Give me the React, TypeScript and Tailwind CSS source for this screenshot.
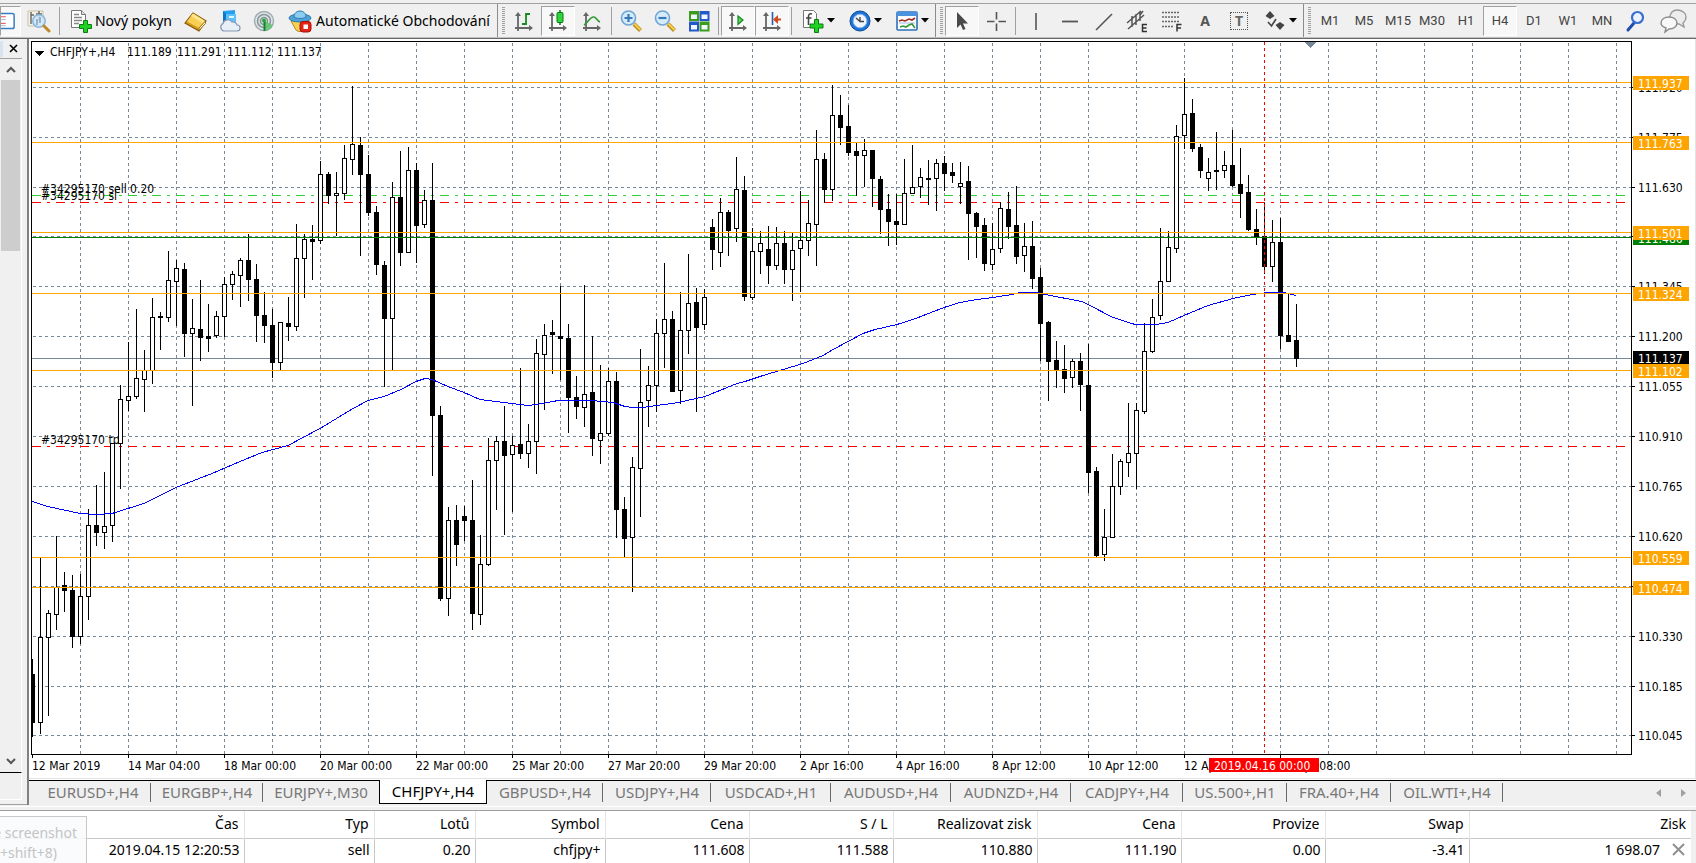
import type { ReactNode } from 'react'
import clsx from 'clsx'

// high, body top, body bottom, low, 1 = rising (hollow)
type Candle = [number, number, number, number, 0 | 1]

const ORIGIN_X = 32
const ORIGIN_Y = 42
const STEP = 8

const candles: Candle[] = [
  [659, 674, 723, 737, 0], [558, 637, 723, 734, 1], [610, 613, 638, 716, 1], [536, 587, 615, 630, 1],
  [572, 585, 591, 612, 0], [575, 590, 637, 648, 0], [574, 596, 637, 644, 1], [509, 525, 597, 620, 1],
  [485, 525, 533, 546, 0], [472, 526, 533, 549, 1], [443, 443, 526, 542, 1], [385, 399, 444, 489, 1],
  [342, 396, 401, 411, 1], [309, 378, 397, 399, 1], [350, 370, 380, 412, 1], [298, 317, 371, 384, 1],
  [312, 316, 318, 350, 0], [251, 280, 318, 322, 1], [260, 268, 282, 326, 1], [263, 269, 334, 357, 0],
  [299, 328, 334, 406, 1], [280, 329, 338, 361, 0], [304, 336, 339, 352, 0], [311, 316, 336, 338, 1],
  [277, 284, 317, 337, 1], [271, 274, 285, 300, 1], [258, 260, 276, 307, 1], [234, 260, 280, 301, 0],
  [264, 279, 316, 342, 0], [292, 315, 326, 343, 0], [309, 325, 363, 378, 0], [322, 322, 363, 370, 1],
  [297, 323, 327, 341, 0], [224, 258, 327, 331, 1], [234, 239, 259, 298, 1], [225, 239, 242, 280, 0],
  [161, 174, 241, 244, 1], [172, 174, 196, 204, 0], [172, 193, 196, 236, 1], [145, 158, 194, 200, 1],
  [86, 144, 160, 175, 1], [137, 145, 175, 256, 0], [155, 174, 213, 216, 0], [206, 212, 265, 275, 0],
  [261, 265, 319, 387, 0], [182, 197, 319, 370, 1], [151, 197, 253, 266, 0], [147, 170, 253, 253, 1],
  [163, 170, 226, 263, 0], [190, 200, 225, 228, 1], [163, 200, 416, 476, 0], [406, 415, 599, 601, 0],
  [507, 520, 599, 616, 1], [505, 520, 545, 566, 0], [506, 516, 521, 541, 0], [480, 520, 614, 630, 0],
  [535, 564, 615, 625, 1], [438, 460, 565, 566, 1], [436, 441, 461, 510, 1], [406, 441, 456, 535, 0],
  [436, 445, 455, 512, 1], [368, 444, 454, 459, 0], [424, 441, 454, 468, 1], [339, 353, 442, 474, 1],
  [324, 335, 355, 410, 1], [320, 332, 335, 374, 0], [286, 336, 339, 380, 0], [324, 338, 398, 433, 0],
  [376, 397, 407, 419, 0], [285, 394, 408, 427, 1], [336, 392, 439, 456, 0], [365, 433, 441, 464, 1],
  [368, 381, 434, 436, 1], [372, 381, 510, 538, 0], [497, 509, 539, 557, 0], [457, 467, 538, 592, 1],
  [349, 402, 469, 517, 1], [366, 385, 401, 427, 1], [319, 333, 386, 412, 1], [263, 319, 334, 368, 1],
  [311, 319, 392, 392, 0], [292, 330, 391, 404, 1], [254, 303, 331, 354, 1], [288, 302, 328, 412, 0],
  [289, 297, 325, 330, 1], [219, 227, 250, 270, 0], [198, 212, 253, 267, 1], [210, 212, 231, 256, 0],
  [157, 189, 229, 242, 1], [176, 190, 297, 301, 0], [228, 251, 298, 300, 1], [231, 243, 252, 274, 1],
  [226, 249, 266, 284, 0], [227, 243, 266, 270, 1], [231, 243, 270, 284, 0], [233, 250, 270, 301, 1],
  [191, 240, 249, 292, 1], [200, 223, 241, 256, 1], [130, 159, 225, 266, 1], [153, 159, 190, 203, 0],
  [85, 115, 190, 201, 1], [95, 115, 128, 145, 0], [105, 126, 153, 156, 0], [143, 151, 156, 196, 0],
  [139, 150, 156, 187, 1], [150, 150, 179, 207, 0], [176, 179, 210, 234, 0], [194, 209, 222, 246, 0],
  [194, 221, 225, 245, 0], [159, 193, 225, 225, 1], [145, 187, 194, 194, 1], [168, 177, 187, 198, 1],
  [160, 178, 180, 205, 0], [159, 163, 179, 211, 1], [156, 163, 174, 191, 0], [163, 172, 176, 183, 0],
  [162, 183, 187, 204, 1], [166, 181, 214, 260, 0], [212, 213, 227, 258, 0], [218, 225, 264, 271, 0],
  [223, 249, 265, 270, 1], [202, 208, 249, 253, 1], [192, 209, 227, 239, 0], [186, 225, 257, 264, 0],
  [223, 246, 256, 272, 1], [221, 246, 279, 289, 0], [268, 277, 324, 361, 0], [321, 322, 362, 401, 0],
  [341, 360, 371, 388, 0], [345, 369, 379, 393, 0], [359, 361, 378, 388, 1], [353, 361, 385, 411, 0],
  [344, 385, 473, 493, 0], [467, 471, 556, 557, 0], [509, 537, 555, 561, 1], [454, 486, 538, 538, 1],
  [459, 461, 487, 495, 1], [403, 453, 463, 477, 1], [403, 410, 454, 489, 1], [323, 351, 412, 414, 1],
  [299, 317, 352, 353, 1], [228, 281, 316, 320, 1], [231, 247, 282, 282, 1], [125, 136, 249, 253, 1],
  [78, 114, 136, 149, 1], [99, 113, 149, 152, 0], [144, 147, 171, 178, 0], [158, 172, 179, 191, 1],
  [132, 170, 172, 190, 0], [151, 165, 171, 178, 1], [130, 165, 186, 187, 0], [148, 184, 194, 218, 0],
  [175, 192, 230, 231, 0], [209, 229, 237, 245, 0], [203, 236, 267, 274, 0], [220, 242, 267, 282, 1],
  [218, 242, 336, 349, 0], [294, 335, 342, 342, 0], [304, 340, 359, 367, 0],
]

const average: [number, number][] = [
  [32, 501], [48, 506], [80, 513], [96, 514], [112, 513], [144, 503], [176, 487], [212, 473], [240, 461],
  [262, 452], [288, 445], [320, 428], [353, 408], [368, 400], [384, 396], [401, 389], [416, 381], [425, 378],
  [432, 379], [448, 386], [464, 392], [480, 399], [504, 402], [528, 405], [543, 403], [558, 400], [592, 400],
  [613, 402], [625, 406], [633, 407], [643, 407], [663, 404], [673, 403], [687, 400], [705, 396], [737, 383],
  [745, 381], [763, 375], [783, 369], [803, 363], [823, 355], [833, 349], [848, 341], [863, 333], [875, 329],
  [897, 324], [913, 319], [944, 307], [960, 302], [977, 299], [993, 297], [1012, 294], [1020, 292],
  [1037, 292], [1045, 294], [1082, 301], [1088, 304], [1113, 317], [1135, 324], [1156, 324], [1168, 322],
  [1184, 315], [1208, 305], [1233, 298], [1252, 294], [1268, 292], [1284, 292], [1296, 295],
]

const gridPrices = [
  { y: 87, label: '111.920' },
  { y: 137, label: '111.775' },
  { y: 187, label: '111.630' },
  { y: 236, label: '111.485' },
  { y: 286, label: '111.345' },
  { y: 336, label: '111.200' },
  { y: 386, label: '111.055' },
  { y: 436, label: '110.910' },
  { y: 486, label: '110.765' },
  { y: 536, label: '110.620' },
  { y: 586, label: '110.475' },
  { y: 636, label: '110.330' },
  { y: 686, label: '110.185' },
  { y: 735, label: '110.045' },
]

const levels = [
  { y: 237, label: '111.486', color: '#008000' },
  { y: 82, label: '111.937', color: '#ffa500' },
  { y: 142, label: '111.763', color: '#ffa500' },
  { y: 232, label: '111.501', color: '#ffa500' },
  { y: 293, label: '111.324', color: '#ffa500' },
  { y: 370, label: '111.102', color: '#ffa500' },
  { y: 557, label: '110.559', color: '#ffa500' },
  { y: 587, label: '110.474', color: '#ffa500' },
]

const orders = [
  { y: 195, label: '#34295170 sell 0.20', color: '#32cd32' },
  { y: 202, label: '#34295170 sl', color: '#ff0000' },
  { y: 446, label: '#34295170 tp', color: '#ff0000' },
]

const quote = ['111.189', '111.291', '111.112', '111.137']

const times = [
  '12 Mar 2019', '14 Mar 04:00', '18 Mar 00:00', '20 Mar 00:00', '22 Mar 00:00', '25 Mar 20:00', '27 Mar 20:00',
  '29 Mar 20:00', '2 Apr 16:00', '4 Apr 16:00', '8 Apr 12:00', '10 Apr 12:00', '12 Apr 12:00', '16 Apr 08:00',
]

const tabs = [
  { name: 'EURUSD+,H4', width: 'w-29' },
  { name: 'EURGBP+,H4', width: 'w-28' },
  { name: 'EURJPY+,M30', width: 'w-29' },
  { name: 'CHFJPY+,H4', width: 'w-27' },
  { name: 'GBPUSD+,H4', width: 'w-29' },
  { name: 'USDJPY+,H4', width: 'w-27' },
  { name: 'USDCAD+,H1', width: 'w-30' },
  { name: 'AUDUSD+,H4', width: 'w-30' },
  { name: 'AUDNZD+,H4', width: 'w-30' },
  { name: 'CADJPY+,H4', width: 'w-28' },
  { name: 'US.500+,H1', width: 'w-26' },
  { name: 'FRA.40+,H4', width: 'w-26' },
  { name: 'OIL.WTI+,H4', width: 'w-28' },
]

const columns = [
  { title: 'Čas', value: '2019.04.15 12:20:53', width: 'w-[244px]' },
  { title: 'Typ', value: 'sell', width: 'w-[130px]' },
  { title: 'Lotů', value: '0.20', width: 'w-[101px]' },
  { title: 'Symbol', value: 'chfjpy+', width: 'w-[130px]' },
  { title: 'Cena', value: '111.608', width: 'w-36' },
  { title: 'S / L', value: '111.588', width: 'w-36' },
  { title: 'Realizovat zisk', value: '110.880', width: 'w-36' },
  { title: 'Cena', value: '111.190', width: 'w-36' },
  { title: 'Provize', value: '0.00', width: 'w-36' },
  { title: 'Swap', value: '-3.41', width: 'w-36' },
]

const timeframes = ['M1', 'M5', 'M15', 'M30', 'H1', 'H4', 'D1', 'W1', 'MN']

/* ---------- toolbar ---------- */

function Icon({ children }: { children: ReactNode }) {
  return (
    <svg width="24" height="24" viewBox="0 0 24 24" fill="none" className="shrink-0" aria-hidden="true">
      {children}
    </svg>
  )
}

function ToolButton({
  label,
  pressed,
  menu,
  className,
  children,
}: {
  label: string
  pressed?: boolean
  menu?: boolean
  className?: string
  children: ReactNode
}) {
  return (
    <button
      aria-label={label}
      aria-pressed={pressed}
      className={clsx(
        'flex h-[30px] shrink-0 items-center border',
        menu ? 'w-[47px] pl-1.5' : 'justify-center',
        !menu && !className && 'w-[34px]',
        pressed ? 'border-t-[#a0a0a0] border-l-[#a0a0a0] border-r-white border-b-white bg-[#f8f8f8]' : 'border-transparent',
        className,
      )}
    >
      {children}
      {menu && <Caret />}
    </button>
  )
}

function Caret() {
  return (
    <svg width="8" height="5" viewBox="0 0 8 5" className="ml-0.5 shrink-0" aria-hidden="true">
      <path d="M0 0h8L4 4.5z" fill="#000" />
    </svg>
  )
}

function Separator() {
  return <div className="mx-0.5 h-7 w-px shrink-0 bg-[#a0a0a0]" />
}

function Grip() {
  return (
    <div className="flex h-[33px] shrink-0 items-center border-l border-[#8c8c8c] pr-0.5 pl-1">
      <svg width="3" height="28" aria-hidden="true">
        <line x1="1.5" x2="1.5" y1="0" y2="28" stroke="#a0a0a0" strokeWidth="3" strokeDasharray="1 1" />
      </svg>
    </div>
  )
}

function Axes() {
  return (
    <g>
      <path d="M6 5v17M3 19h15" stroke="#666" strokeWidth="1.8" />
      <path d="M3 7l3-4 3 4zM17 16l4 3-4 3z" fill="#666" />
    </g>
  )
}

function Toolbar() {
  return (
    <header className="shrink-0 border-b border-[#696969] bg-[#f0f0f0] pt-[3px]">
      <div className="flex h-[35px] items-center overflow-hidden border-t border-[#a0a0a0] border-b border-b-[#c0c0c0]">
        <ToolButton label="Seznam" pressed className="w-[21px]">
          <svg width="16" height="20" viewBox="0 0 16 20" className="mr-1" aria-hidden="true">
            <rect x="-6" y="2" width="20" height="16" rx="2" fill="#fff" stroke="#3a7cc4" strokeWidth="1.6" />
            <path d="M0 5.5h5M0 12.500h5" stroke="#e04040" />
            <path d="M0 8.500h5M0 15h5" stroke="#9db8d8" />
          </svg>
        </ToolButton>
        <ToolButton label="Strategy Tester" className="w-9">
          <Icon>
            <path d="M1 2h15v15H1z" fill="#f4f1e6" stroke="#c8c0a8" />
            <path d="M4 3v12M4 6h3M12 2v10M9 5h6" stroke="#666" strokeWidth="1.4" />
            <circle cx="12" cy="12" r="6.200" fill="#cfe8fb" fillOpacity=".85" stroke="#8ab8dc" strokeWidth="1.600" />
            <path d="M10 10v6M13 8v6" stroke="#7a9cb8" strokeWidth="1.400" />
            <path d="M17 17l5 5" stroke="#c08a2c" strokeWidth="3" strokeLinecap="round" />
          </Icon>
        </ToolButton>
        <Separator />
        <ToolButton label="Nový pokyn" className="w-[117px] gap-0.5">
          <Icon>
            <path d="M2.500 1.500h10l4 4v13h-14z" fill="#fff" stroke="#777" />
            <path d="M12.500 1.500v4h4" stroke="#777" fill="#ddd" />
            <path d="M5 5.500h5M5 8.500h8M5 11.500h8M5 14.500h5" stroke="#888" strokeWidth="1.500" />
            <path d="M14.500 11.500h4v4h4v4h-4v4h-4v-4h-4v-4h4z" fill="#1ed321" stroke="#0a7d12" />
          </Icon>
          <span className="text-sm whitespace-nowrap">Nový pokyn</span>
        </ToolButton>
        <ToolButton label="MetaEditor">
          <Icon>
            <path d="M1 14L9 4l13 8-7 10z" fill="#d79a1a" stroke="#8a5c08" strokeWidth="1.200" />
            <path d="M9 4.500L21 12l-6 7L3 12.500z" fill="#f7cf55" />
            <path d="M9 4.500L21 12l-2 2.500L7 7z" fill="#ffe48e" />
            <path d="M15 19l6.500-7v2.500L15 21.500z" fill="#fff3cc" stroke="#8a5c08" strokeWidth=".8" />
          </Icon>
        </ToolButton>
        <ToolButton label="VPS">
          <Icon>
            <path d="M5 2l12-1v13H5z" fill="#25a0f0" />
            <path d="M5 2l3 3v10l-3-2z" fill="#0b76c8" />
            <path d="M8 5h10v9H8z" fill="#5cc0fb" />
            <path d="M11 7h5v2h-5z" fill="#e6f6ff" />
            <path
              d="M6 22a4 4 0 01-1-7.500 5 5 0 019-1.500 4 4 0 015 3 3 3 0 010 6z"
              fill="#e9eff7"
              stroke="#8397b5"
              strokeWidth="1.200"
            />
          </Icon>
        </ToolButton>
        <ToolButton label="Signály">
          <Icon>
            <circle cx="12" cy="12" r="9.500" fill="#dfe5e8" stroke="#a3adb2" strokeWidth="1.500" />
            <circle cx="12" cy="12" r="6.500" stroke="#8b989e" strokeWidth="1.600" />
            <circle cx="12" cy="12" r="3.500" stroke="#7d9a88" strokeWidth="1.600" />
            <path d="M12 12l9 4a10 10 0 01-9 6z" fill="#5cc36a" fillOpacity=".8" />
            <path d="M12.500 12v10" stroke="#12852a" strokeWidth="2" />
            <circle cx="12" cy="11.500" r="2" fill="#2e9c48" />
          </Icon>
        </ToolButton>
        <ToolButton label="Automatické Obchodování" className="w-[216px] gap-1">
          <Icon>
            <path d="M3 12h18l-4 9c-3 2-7 2-9 0z" fill="#f6d251" stroke="#b28a1c" />
            <ellipse cx="12" cy="9" rx="11" ry="4" fill="#4fa3d8" stroke="#2b78ab" />
            <path d="M6 8c0-8 12-8 12 0-3 2-9 2-12 0z" fill="#8ccdf2" stroke="#2b78ab" />
            <rect x="12" y="12.500" width="11" height="10.500" rx="3" fill="#e32417" stroke="#a80f08" />
            <rect x="15.500" y="15.500" width="4.500" height="4.500" fill="#fff" />
          </Icon>
          <span className="text-sm whitespace-nowrap">Automatické Obchodování</span>
        </ToolButton>

        <Grip />
        <ToolButton label="Sloupcový graf">
          <Icon>
            <Axes />
            <path d="M14 4v12M14 5h4M10 15h4" stroke="#168a1e" strokeWidth="1.800" />
          </Icon>
        </ToolButton>
        <ToolButton label="Svíčkový graf" pressed>
          <Icon>
            <Axes />
            <path d="M14 1v15" stroke="#0b7a12" strokeWidth="1.500" />
            <rect x="11" y="3.500" width="6" height="10" rx="1" fill="#2ed63a" stroke="#0b7a12" />
          </Icon>
        </ToolButton>
        <ToolButton label="Čárový graf">
          <Icon>
            <Axes />
            <path d="M4 16c5-3 6-9 10-8 2 0 3 4 6 5" stroke="#2f9a37" strokeWidth="1.600" />
          </Icon>
        </ToolButton>
        <Separator />
        <ToolButton label="Přiblížit">
          <Icon>
            <path d="M15 15l6.500 6.500" stroke="#b98a1b" strokeWidth="4" />
            <path d="M15.500 15l6 6" stroke="#f4d04c" strokeWidth="2" />
            <circle cx="9.500" cy="9" r="7" fill="#d3ebfb" stroke="#6ea5d4" strokeWidth="1.600" />
            <path d="M9.500 5v8M5.500 9h8" stroke="#3a78b8" strokeWidth="2.200" />
          </Icon>
        </ToolButton>
        <ToolButton label="Oddálit">
          <Icon>
            <path d="M15 15l6.500 6.500" stroke="#b98a1b" strokeWidth="4" />
            <path d="M15.500 15l6 6" stroke="#f4d04c" strokeWidth="2" />
            <circle cx="9.500" cy="9" r="7" fill="#d3ebfb" stroke="#6ea5d4" strokeWidth="1.600" />
            <path d="M5.500 9h8" stroke="#3a78b8" strokeWidth="2.200" />
          </Icon>
        </ToolButton>
        <ToolButton label="Dlaždice">
          <Icon>
            <path d="M2 2h10v10H2z" fill="#3c9d1d" />
            <path d="M12.500 2h10v10h-10z" fill="#2457c9" />
            <path d="M2 12.500h10v10H2z" fill="#2457c9" />
            <path d="M12.500 12.500h10v10h-10z" fill="#3c9d1d" />
            <path d="M4 5.500h6v4.500H4zM14.500 5.500h6v4.500h-6zM4 16h6v4.500H4zM14.500 16h6v4.500h-6z" fill="#f2f7ff" />
          </Icon>
        </ToolButton>
        <Separator />
        <ToolButton label="Automatický posun" pressed>
          <Icon>
            <Axes />
            <path d="M12 7l5 4-5 4.500z" fill="#5ad964" stroke="#15851d" strokeWidth="1.200" />
          </Icon>
        </ToolButton>
        <ToolButton label="Posun grafu" pressed>
          <Icon>
            <Axes />
            <path d="M12.500 3v13" stroke="#1d62b0" strokeWidth="1.600" />
            <path d="M18 6l-5 4.500 5 4.500v-3.500h3v-2h-3z" fill="#d4481c" />
          </Icon>
        </ToolButton>
        <Separator />
        <ToolButton label="Indikátory" menu>
          <Icon>
            <path d="M2.500 1.500h10l3 3v14h-13z" fill="#fff" stroke="#777" />
            <path d="M11 5c-3-1-3.500 1-3.500 3v8M5 9h5.500" stroke="#444" strokeWidth="1.600" />
            <path d="M13.500 10.500h4v4.500h4.500v4h-4.500v4.500h-4V19H9v-4h4.500z" fill="#1ed321" stroke="#0a7d12" />
          </Icon>
        </ToolButton>
        <ToolButton label="Periody" menu>
          <Icon>
            <circle cx="12" cy="12" r="10" fill="#1e73d8" stroke="#0b4a9b" />
            <circle cx="12" cy="12" r="6.800" fill="#eef5fc" stroke="#8fb8e8" />
            <path d="M12 8v4.500h4M8 9l4 3.500" stroke="#444" strokeWidth="1.400" />
          </Icon>
        </ToolButton>
        <ToolButton label="Šablony" menu>
          <Icon>
            <rect x="2" y="3" width="20" height="18" rx="1" fill="#fff" stroke="#2c6fbd" strokeWidth="1.600" />
            <path d="M2 3h20v4H2z" fill="#4c93df" />
            <path d="M4 12l3-1 3 1 4-2 3 1 3-2" stroke="#a02a1c" strokeWidth="1.600" />
            <path d="M4 14h16" stroke="#9dbbe0" />
            <path d="M5 18l3-1 3 1 3-2 3-1 3 4" stroke="#2f9a37" strokeWidth="1.600" />
          </Icon>
        </ToolButton>

        <Grip />
        <ToolButton label="Kurzor" pressed>
          <Icon>
            <path d="M7 3v16l3.500-3.500L13 21l2.500-1-2.500-5.500h5z" fill="#4a4a4a" />
          </Icon>
        </ToolButton>
        <ToolButton label="Zaměřovač">
          <Icon>
            <path d="M12.500 3v7.500M12.500 14.500V22M3 12.500h7.500M14.500 12.500H22" stroke="#555" strokeWidth="1.600" />
          </Icon>
        </ToolButton>
        <Separator />
        <ToolButton label="Svislá čára">
          <Icon>
            <path d="M13 4v17" stroke="#555" strokeWidth="1.600" />
          </Icon>
        </ToolButton>
        <ToolButton label="Vodorovná čára">
          <Icon>
            <path d="M5 12.500h16" stroke="#555" strokeWidth="1.800" />
          </Icon>
        </ToolButton>
        <ToolButton label="Trendová čára">
          <Icon>
            <path d="M5 21L21 5" stroke="#555" strokeWidth="1.600" />
          </Icon>
        </ToolButton>
        <ToolButton label="Kanál">
          <Icon>
            <path d="M2 14L16 2M3 20L19 6M7 7v11M11 5v11M15 2v10M18 2l-3 4" stroke="#555" strokeWidth="1.500" />
            <path d="M22 15.500h-4.500v7H22M17.500 19h4" stroke="#333" strokeWidth="1.500" />
          </Icon>
        </ToolButton>
        <ToolButton label="Fibonacci">
          <Icon>
            <path d="M3 3.500h18M3 8h18M3 12.500h18M3 17.500h12" stroke="#666" strokeDasharray="2 1" strokeWidth="1.300" />
            <path d="M22.500 15.500H18v7M18 19h4" stroke="#333" strokeWidth="1.500" />
          </Icon>
        </ToolButton>
        <ToolButton label="Text">
          <span className="text-sm font-bold text-[#555]">A</span>
        </ToolButton>
        <ToolButton label="Textový popisek">
          <span className="flex size-[18px] items-center justify-center border border-dotted border-[#555] text-sm font-bold text-[#666]">
            T
          </span>
        </ToolButton>
        <ToolButton label="Šipky" menu>
          <Icon>
            <path d="M7 2l4.500 5L7 10 2.500 7zM17 21l-4.500-5 4.500-3 4.500 3z" fill="#444" />
            <path d="M5 13l3.500 4L13 10" stroke="#444" strokeWidth="1.600" />
          </Icon>
        </ToolButton>

        <Grip />
        {timeframes.map((tf) => (
          <ToolButton key={tf} label={tf} pressed={tf === 'H4'}>
            <span className="font-[Roboto] text-[13px] text-[#444]">{tf}</span>
          </ToolButton>
        ))}
        <ToolButton label="Hledat">
          <Icon>
            <path d="M10 14l-6 7" stroke="#1e4fae" strokeWidth="3" strokeLinecap="round" />
            <circle cx="13.500" cy="8.500" r="5.500" fill="#eaf3ff" stroke="#3a6fd0" strokeWidth="2.200" />
          </Icon>
        </ToolButton>
        <div className="ml-auto pr-2">
          <ToolButton label="Chat" className="w-7">
            <svg width="28" height="26" viewBox="0 0 28 26" className="shrink-0" aria-hidden="true">
              <path
                d="M17 2c5 0 9 3 9 7s-2 5-3 6l1 4-5-3c-6 0-9-3-9-7s3-7 7-7z"
                fill="#ececec"
                stroke="#999"
                strokeWidth="1.400"
              />
              <path
                d="M9 9c4 0 8 2 8 6s-4 6-8 6l-4 3 1-4c-3-1-5-3-5-5 0-4 4-6 8-6z"
                fill="#f8f8f8"
                stroke="#8a8a8a"
                strokeWidth="1.400"
              />
            </svg>
          </ToolButton>
        </div>
      </div>
    </header>
  )
}

/* ---------- chart ---------- */

function CandleShape({ candle, index }: { candle: Candle; index: number }) {
  const [high, top, bottom, low, rising] = candle
  const x = index * STEP
  return (
    <g>
      <rect x={x} y={high - ORIGIN_Y} width={1} height={low - high} />
      <rect x={x - 2} y={top - ORIGIN_Y} width={5} height={bottom - top} />
      {rising === 1 && (
        <rect x={x - 1} y={top - ORIGIN_Y + 1} width={3} height={bottom - top - 2} fill="#fff" />
      )}
    </g>
  )
}

function Plot() {
  const columnsX = Array.from({ length: 33 }, (_, i) => 48 * (i + 1))
  return (
    <svg className="absolute inset-0 h-full w-full text-xs" shapeRendering="crispEdges">
      {columnsX.map((x) => (
        <line key={x} x1={x + 0.5} x2={x + 0.5} y1="1" y2="100%" stroke="#778899" strokeDasharray="3 3" />
      ))}
      {gridPrices.map((g) => (
        <line
          key={g.label}
          x1="1"
          x2="100%"
          y1={g.y - ORIGIN_Y + 0.5}
          y2={g.y - ORIGIN_Y + 0.5}
          stroke="#778899"
          strokeDasharray="3 3"
        />
      ))}
      <line x1="0" x2="100%" y1={358 - ORIGIN_Y + 0.5} y2={358 - ORIGIN_Y + 0.5} stroke="#778899" />
      {orders.map((o) => (
        <g key={o.label}>
          <line
            x1="0"
            x2="100%"
            y1={o.y - ORIGIN_Y + 0.5}
            y2={o.y - ORIGIN_Y + 0.5}
            stroke={o.color}
            strokeDasharray="9 6 3 6"
          />
          <text x="9" y={o.y - ORIGIN_Y - 2}>
            {o.label}
          </text>
        </g>
      ))}
      {candles.map((c, i) => (
        <CandleShape key={i} candle={c} index={i} />
      ))}
      <polyline
        points={average.map(([x, y]) => `${x - ORIGIN_X},${y - ORIGIN_Y + 0.5}`).join(' ')}
        fill="none"
        stroke="#0000ff"
      />
      {levels.map((l) => (
        <line key={l.label} x1="0" x2="100%" y1={l.y - ORIGIN_Y + 0.5} y2={l.y - ORIGIN_Y + 0.5} stroke={l.color} />
      ))}
      <line x1="1232.5" x2="1232.5" y1="0" y2="100%" stroke="#ff0000" strokeDasharray="3 3" />
      <path d="M1272 0h12l-6 6z" fill="#778899" />
      <path d="M3 9h9l-4.500 5z" />
      <text x="18" y="14">
        CHFJPY+,H4
      </text>
      {quote.map((q, i) => (
        <text key={q} x={95 + i * 50} y="14">
          {q}
        </text>
      ))}
    </svg>
  )
}

function PriceAxis() {
  return (
    <svg className="h-full w-[63px] shrink-0 text-xs" shapeRendering="crispEdges">
      {gridPrices.map((g) => (
        <g key={g.label}>
          <rect x="0" y={g.y - ORIGIN_Y + 1} width="3" height="1" />
          <text x="6" y={g.y - ORIGIN_Y + 6}>
            {g.label}
          </text>
        </g>
      ))}
      <rect x="1" y={352 - ORIGIN_Y} width="56" height="14" />
      <text x="6" y={364 - ORIGIN_Y} fill="#fff">
        111.137
      </text>
      {levels.map((l) => (
        <g key={l.label}>
          <rect x="1" y={l.y - ORIGIN_Y - 5} width="56" height="14" fill={l.color} />
          <text x="6" y={l.y - ORIGIN_Y + 7} fill="#fff">
            {l.label}
          </text>
        </g>
      ))}
    </svg>
  )
}

function TimeAxis() {
  return (
    <svg className="block h-[23px] w-full text-xs" shapeRendering="crispEdges">
      {times.map((t, i) => (
        <g key={t}>
          <rect x={i * 96 + 1} y="0" width="1" height="3" />
          <text x={i * 96 + 1} y="15">
            {t}
          </text>
        </g>
      ))}
      <rect x="1178" y="3" width="110" height="14" fill="#ff0000" />
      <text x="1183" y="15" fill="#fff">
        2019.04.16 00:00
      </text>
    </svg>
  )
}

function SidePanel() {
  return (
    <aside className="flex w-[27px] shrink-0 flex-col">
      <div className="flex h-5 w-[22px] items-center justify-between border-b border-[#a0a0a0]">
        <div className="h-4 w-[3px] bg-[#d6e4f2]" />
        <button aria-label="Zavřít panel" className="mr-1">
          <svg width="9" height="9" viewBox="0 0 9 9" aria-hidden="true">
            <path d="M1 1l7 7M8 1L1 8" stroke="#000" strokeWidth="1.600" />
          </svg>
        </button>
      </div>
      <div className="flex w-[22px] flex-1 flex-col border-r border-b border-r-white border-b-black pl-px">
        <button aria-label="Nahoru" className="flex h-[21px] w-5 items-center justify-center">
          <svg width="10" height="7" viewBox="0 0 10 7" aria-hidden="true">
            <path d="M1 6l4-4 4 4" fill="none" stroke="#555" strokeWidth="2" />
          </svg>
        </button>
        <div className="h-[171px] w-[19px] bg-[#cdcdcd]" />
        <button aria-label="Dolů" className="mt-auto flex h-[21px] w-5 items-center justify-center">
          <svg width="10" height="7" viewBox="0 0 10 7" aria-hidden="true">
            <path d="M1 1l4 4 4-4" fill="none" stroke="#555" strokeWidth="2" />
          </svg>
        </button>
      </div>
      <div className="h-[27px] w-[22px] border-r border-b border-white" />
      <div className="h-[5px] border-b border-[#a0a0a0]" />
    </aside>
  )
}

function ChartTabs() {
  return (
    <nav className="flex h-[25px] items-stretch">
      <div className="w-1.5 shrink-0 border-t border-black" />
      {tabs.map((t, i) => {
        const active = t.name === 'CHFJPY+,H4'
        return (
          <button
            key={t.name}
            className={clsx(
              'relative flex h-6 shrink-0 items-center justify-center text-[15px] whitespace-nowrap',
              t.width,
              active ? 'border border-t-0 border-black bg-white text-black' : 'border-t border-black text-[#777]',
            )}
          >
            {t.name}
            {!active && tabs[i + 1]?.name !== 'CHFJPY+,H4' && (
              <span className="absolute top-0.5 right-0 h-[19px] w-px bg-[#696969]" />
            )}
          </button>
        )
      })}
      <div className="flex flex-1 items-center justify-end gap-5 border-t border-black pr-2.5">
        <button aria-label="Předchozí">
          <svg width="5" height="8" viewBox="0 0 5 8" aria-hidden="true">
            <path d="M5 0v8L0 4z" fill="#a0a0a0" />
          </svg>
        </button>
        <button aria-label="Další">
          <svg width="5" height="8" viewBox="0 0 5 8" aria-hidden="true">
            <path d="M0 0v8l5-4z" fill="#a0a0a0" />
          </svg>
        </button>
      </div>
    </nav>
  )
}

/* ---------- terminal ---------- */

function Terminal() {
  return (
    <section className="relative h-[53px] shrink-0 overflow-hidden border-t border-[#a0a0a0] pr-[5px]">
      <table className="w-full table-fixed border-collapse bg-white text-right text-sm">
        <thead>
          <tr className="h-[27px] border-b border-[#c8c8c8]">
            {columns.map((c, i) => (
              <th key={i} className={clsx('border-r border-[#e4e4e4] p-0 pr-[5px] font-normal', c.width)}>
                {c.title}
              </th>
            ))}
            <th className="p-0 pr-[5px] font-normal">Zisk</th>
          </tr>
        </thead>
        <tbody>
          <tr className="h-[25px] border-b border-[#c8c8c8]">
            {columns.map((c, i) => (
              <td key={i} className="border-r border-[#c8c8c8] p-0 pr-1 pb-0.5">
                {c.value}
              </td>
            ))}
            <td className="p-0 pr-1.5 pb-0.5">
              <div className="flex items-center justify-end gap-3">
                1 698.07
                <button aria-label="Zavřít pozici">
                  <svg width="13" height="13" viewBox="0 0 13 13" aria-hidden="true">
                    <path d="M1 1l11 11M12 1L1 12" stroke="#909090" strokeWidth="2" />
                  </svg>
                </button>
              </div>
            </td>
          </tr>
        </tbody>
      </table>
      <div className="absolute top-[5px] left-0 flex h-12 w-[87px] flex-col overflow-hidden border-t border-r border-[#c8c8c8] bg-[#f8fafc]/85 pt-1.5 text-sm leading-5 text-[#c4c4c4]">
        <span className="flex w-[77px] justify-end whitespace-nowrap">e screenshot</span>
        <span className="whitespace-nowrap">+shift+8)</span>
      </div>
    </section>
  )
}

export default function App() {
  return (
    <div className="flex h-screen min-h-[600px] flex-col overflow-hidden bg-[#f0f0f0] font-['Noto_Sans',sans-serif] text-black">
      <Toolbar />
      <div className="flex min-h-0 flex-1">
        <SidePanel />
        <main className="flex min-w-0 flex-1 flex-col border-l-2 border-[#808080]">
          <div className="flex min-h-0 flex-1 flex-col border-r border-b border-[#e3e3e3] bg-white pt-0.5 pl-0.5 font-['DejaVu_Sans_Condensed','DejaVu_Sans',sans-serif]">
            <div className="flex min-h-0 flex-1">
              <div className="relative min-w-0 flex-1 border border-black">
                <Plot />
              </div>
              <PriceAxis />
            </div>
            <TimeAxis />
          </div>
          <div className="h-px bg-white" />
          <ChartTabs />
        </main>
      </div>
      <div className="mt-px h-1 shrink-0 border-t border-white" />
      <Terminal />
    </div>
  )
}
